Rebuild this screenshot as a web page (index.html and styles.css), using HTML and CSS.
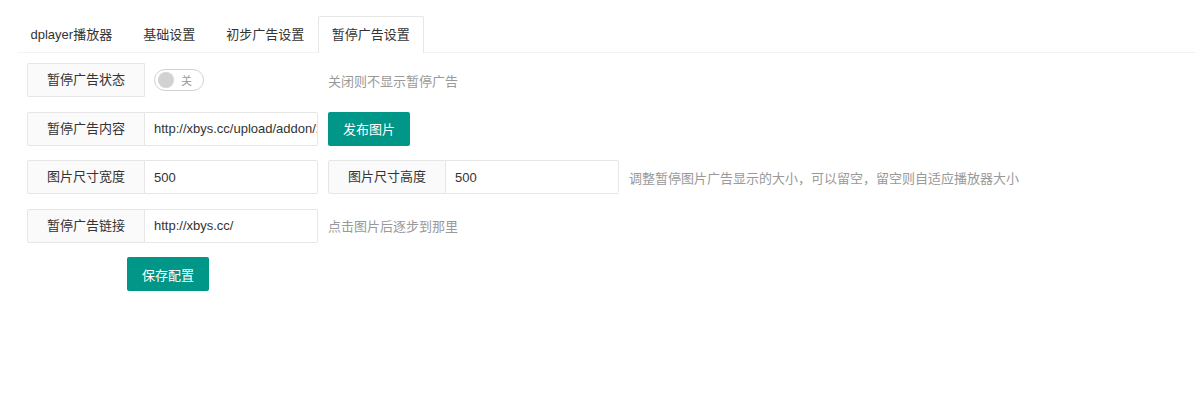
FILE: index.html
```html
<!DOCTYPE html>
<html lang="zh-CN">
<head>
  <meta charset="UTF-8">
  <title>暂停广告设置</title>
  <link rel="stylesheet" href="styles.css">
</head>
<body>
  <div class="tab">
    <ul class="tab-title">
      <li>dplayer播放器</li>
      <li>基础设置</li>
      <li class="last">初步广告设置</li>
      <li class="this">暂停广告设置</li>
    </ul>
    <form class="tab-content">
      <div class="form-item">
        <label class="form-label">暂停广告状态</label>
        <div class="switch">
          <span class="knob"></span>
          <em>关</em>
        </div>
        <div class="aux aux-wide">关闭则不显示暂停广告</div>
      </div>

      <div class="form-item">
        <label class="form-label">暂停广告内容</label>
        <input class="input" type="text" value="http://xbys.cc/upload/addon/2019/pause.jpg">
        <button type="button" class="btn">发布图片</button>
      </div>

      <div class="form-item">
        <label class="form-label">图片尺寸宽度</label>
        <input class="input" type="text" value="500">
        <label class="form-label second">图片尺寸高度</label>
        <input class="input" type="text" value="500">
        <div class="aux">调整暂停图片广告显示的大小，可以留空，留空则自适应播放器大小</div>
      </div>

      <div class="form-item">
        <label class="form-label">暂停广告链接</label>
        <input class="input" type="text" value="http://xbys.cc/">
        <div class="aux">点击图片后逐步到那里</div>
      </div>

      <div class="form-item submit">
        <button type="button" class="btn">保存配置</button>
      </div>
    </form>
  </div>
</body>
</html>
```

FILE: styles.css
```css
body {
  margin: 0;
  background: #fff;
  font-family: "Liberation Sans", "Noto Sans CJK SC", sans-serif;
  font-size: 13px;
  color: #333;
}
.tab {
  padding: 16px 5px 0 17px;
}
.tab-title {
  display: flex;
  list-style: none;
  margin: 0;
  padding: 0;
  height: 36px;
  border-bottom: 1px solid #f2f2f2;
}
.tab-title li {
  padding: 0 13.5px;
  margin-right: 4px;
  height: 36px;
  line-height: 38px;
  white-space: nowrap;
}
.tab-title li.last {
  margin-right: 0;
}
.tab-title li.this {
  padding: 0 13px;
  height: 36px;
  line-height: 36px;
  border: 1px solid #e6e6e6;
  border-bottom: none;
  border-radius: 2px 2px 0 0;
  background: #fff;
  margin-bottom: -1px;
}
.tab-content {
  padding: 10px 0 0 10px;
}
.form-item {
  display: flex;
  align-items: center;
  height: 34px;
  margin-bottom: 14.5px;
}
.form-label {
  box-sizing: border-box;
  width: 118px;
  height: 34px;
  line-height: 32px;
  text-align: center;
  background: #fafafa;
  border: 1px solid #e6e6e6;
  border-radius: 2px 0 0 2px;
  flex-shrink: 0;
}
.form-label.second {
  margin-left: 10px;
}
.input {
  box-sizing: border-box;
  width: 173px;
  height: 34px;
  padding: 0 0 0 9px;
  border: 1px solid #e6e6e6;
  border-left: none;
  border-radius: 0 2px 2px 0;
  font-family: inherit;
  font-size: 13px;
  color: #333;
  outline: none;
}
.switch {
  box-sizing: border-box;
  display: flex;
  align-items: center;
  width: 50px;
  height: 22px;
  margin-left: 9px;
  padding: 0 3px;
  border: 1px solid #d2d2d2;
  border-radius: 20px;
}
.switch .knob {
  width: 16px;
  height: 16px;
  border-radius: 50%;
  background: #d2d2d2;
}
.switch em {
  font-style: normal;
  font-size: 11px;
  color: #999;
  margin-left: 7px;
}
.btn {
  box-sizing: border-box;
  height: 34px;
  padding: 0 15px;
  margin-left: 10px;
  border: none;
  border-radius: 2px;
  background: #009688;
  color: #fff;
  font-family: inherit;
  font-size: 13px;
  cursor: pointer;
}
.aux {
  margin-left: 10px;
  color: #999;
  white-space: nowrap;
}
.aux-wide {
  margin-left: 124px;
}
.submit {
  padding-left: 90px;
}
```
